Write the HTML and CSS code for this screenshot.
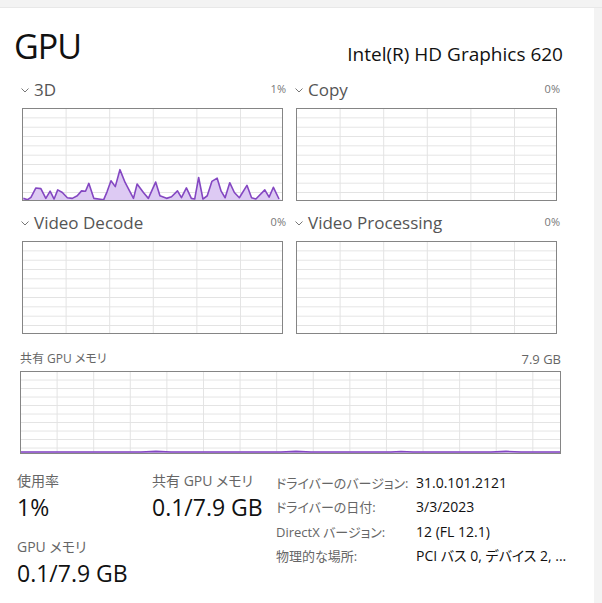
FILE: index.html
```html
<!DOCTYPE html>
<html lang="ja">
<head>
<meta charset="utf-8">
<title>GPU</title>
<link rel="stylesheet" href="styles.css">
</head>
<body>
<div class="topbar"></div>
<div class="main">
  <div class="content">
    <header class="head">
      <h1 class="title">GPU</h1>
      <div class="model">Intel(R) HD Graphics 620</div>
    </header>

    <div class="engines">
      <section class="engine">
        <div class="engine-head">
          <span class="name"><svg class="chev" viewBox="0 0 8 5"><polyline points="0.5,0.5 4,4 7.5,0.5"/></svg>3D</span>
          <span class="pct">1%</span>
        </div>
        <div class="graph">
          <svg class="plot" viewBox="21 24 783 279" preserveAspectRatio="none">
            <path class="area" d="M21,303 L22,298 35,302 45,295 60,266 75,268 90,298 103,276 115,300 126,272 140,280 155,296 170,298 185,290 198,275 210,276 220,252 235,298 265,302 275,278 287,244 300,262 314,210 330,250 355,298 366,254 385,280 400,298 422,248 435,290 455,298 470,293 488,275 500,296 515,266 530,298 540,300 552,234 565,300 578,290 592,246 608,236 620,276 632,296 646,250 660,280 675,296 698,258 712,296 725,300 752,272 765,294 778,264 795,300 804,303 Z"/>
            <polyline class="line" points="22,298 35,302 45,295 60,266 75,268 90,298 103,276 115,300 126,272 140,280 155,296 170,298 185,290 198,275 210,276 220,252 235,298 265,302 275,278 287,244 300,262 314,210 330,250 355,298 366,254 385,280 400,298 422,248 435,290 455,298 470,293 488,275 500,296 515,266 530,298 540,300 552,234 565,300 578,290 592,246 608,236 620,276 632,296 646,250 660,280 675,296 698,258 712,296 725,300 752,272 765,294 778,264 795,300"/>
          </svg>
        </div>
      </section>

      <section class="engine">
        <div class="engine-head">
          <span class="name"><svg class="chev" viewBox="0 0 8 5"><polyline points="0.5,0.5 4,4 7.5,0.5"/></svg>Copy</span>
          <span class="pct">0%</span>
        </div>
        <div class="graph"></div>
      </section>

      <section class="engine">
        <div class="engine-head">
          <span class="name"><svg class="chev" viewBox="0 0 8 5"><polyline points="0.5,0.5 4,4 7.5,0.5"/></svg>Video Decode</span>
          <span class="pct">0%</span>
        </div>
        <div class="graph"></div>
      </section>

      <section class="engine">
        <div class="engine-head">
          <span class="name"><svg class="chev" viewBox="0 0 8 5"><polyline points="0.5,0.5 4,4 7.5,0.5"/></svg>Video Processing</span>
          <span class="pct">0%</span>
        </div>
        <div class="graph"></div>
      </section>
    </div>

    <section class="shared">
      <div class="shared-head">
        <span class="shared-label">共有 GPU メモリ</span>
        <span class="shared-max">7.9 GB</span>
      </div>
      <div class="graph graph-wide">
        <svg class="plot" viewBox="0 0 539 81" preserveAspectRatio="none">
          <path class="area" d="M0,81 L0,79.6 120,79.6 135,79 150,79.6 260,79.6 275,79 290,79.6 370,79.6 380,79.1 392,79.6 470,79.6 485,79 500,79.6 539,79.6 539,81 Z"/>
          <polyline class="line" points="0,80 120,80 135,79.4 150,80 260,80 275,79.4 290,80 370,80 380,79.5 392,80 470,80 485,79.4 500,80 539,80"/>
        </svg>
      </div>
    </section>

    <div class="stats">
      <div class="stat-col stat-col-1">
        <div class="stat-label">使用率</div>
        <div class="stat-value">1%</div>
        <div class="stat-label stat-gap">GPU メモリ</div>
        <div class="stat-value">0.1/7.9 GB</div>
      </div>
      <div class="stat-col stat-col-2">
        <div class="stat-label">共有 GPU メモリ</div>
        <div class="stat-value">0.1/7.9 GB</div>
      </div>
      <dl class="props">
        <dt>ドライバーのバージョン:</dt><dd>31.0.101.2121</dd>
        <dt>ドライバーの日付:</dt><dd>3/3/2023</dd>
        <dt>DirectX バージョン:</dt><dd>12 (FL 12.1)</dd>
        <dt>物理的な場所:</dt><dd>PCI バス 0, デバイス 2, ...</dd>
      </dl>
    </div>
  </div>
  <div class="scrollbar"></div>
</div>
</body>
</html>
```

FILE: styles.css
```css
html, body {
  margin: 0;
  padding: 0;
}

body {
  width: 602px;
  height: 603px;
  overflow: hidden;
  background: #ffffff;
  color: #1a1a1a;
  font-family: "Open Sans", "Noto Sans CJK JP", sans-serif;
  font-feature-settings: "palt";
}

.topbar {
  height: 7px;
  background: #f3f3f3;
  border-bottom: 1px solid #e8e8e8;
}

.main {
  display: flex;
  height: 595px;
}

.content {
  width: 594px;
  padding-left: 14px;
  box-sizing: border-box;
}

.scrollbar {
  width: 8px;
  background: #f3f3f3;
}

/* header */
.head {
  display: flex;
  justify-content: space-between;
  align-items: flex-end;
  padding-top: 18px;
  padding-right: 31px;
}

.title {
  margin: 0;
  font-size: 34px;
  line-height: 40px;
  font-weight: 400;
  letter-spacing: -1px;
  color: #111;
}

.model {
  font-size: 19px;
  line-height: 24px;
  color: #111;
}

/* engine graphs */
.engines {
  display: grid;
  grid-template-columns: 266px 266px;
  column-gap: 8px;
  row-gap: 11px;
  margin-top: 13px;
  margin-left: 6px;
}

.engine-head {
  height: 29px;
  display: flex;
  justify-content: space-between;
  align-items: baseline;
}

.name {
  display: flex;
  align-items: center;
  font-size: 17px;
  line-height: 20px;
  color: #555;
}

.chev {
  width: 8px;
  height: 5px;
  margin: 1px 5px 0 1px;
  fill: none;
  stroke: #777;
  stroke-width: 1;
}

.pct {
  font-size: 11px;
  line-height: 20px;
  color: #777;
}

.graph {
  box-sizing: border-box;
  height: 93px;
  margin: 0 3px 0 2px;
  border: 1px solid #858585;
  background-color: #fff;
  background-image:
    linear-gradient(90deg, transparent calc(100% - 1px), #e3e3e3 calc(100% - 1px)),
    linear-gradient(180deg, transparent calc(100% - 1px), #e3e3e3 calc(100% - 1px));
  background-size: 43.6px 100%, 100% 9.33px;
}

.plot {
  display: block;
  width: 100%;
  height: 100%;
}

.area {
  fill: #ddcaf3;
  stroke: none;
}

.line {
  fill: none;
  stroke: #8447c2;
  stroke-width: 1.6;
  stroke-linejoin: round;
  vector-effect: non-scaling-stroke;
}

/* shared memory */
.shared {
  margin-left: 6px;
}

.shared-head {
  height: 37px;
  box-sizing: border-box;
  width: 541px;
  display: flex;
  justify-content: space-between;
  align-items: flex-end;
  padding-bottom: 4px;
}

.shared-label {
  font-size: 12px;
  line-height: 16px;
  color: #666;
}

.shared-max {
  font-size: 13px;
  line-height: 16px;
  color: #666;
}

.graph-wide {
  width: 541px;
  height: 83px;
  margin: 0;
  background-size: 36.6px 100%, 100% 8.5px;
}

/* stats */
.stats {
  display: flex;
  margin-top: 17px;
  padding-left: 3px;
}

.stat-col-1 {
  width: 135px;
}

.stat-col-2 {
  width: 124px;
}

.stat-label {
  height: 20px;
  overflow: visible;
  font-size: 14px;
  line-height: 20px;
  color: #666;
}

.stat-gap {
  margin-top: 14px;
}

.stat-value {
  height: 32px;
  font-size: 23px;
  line-height: 32px;
  color: #111;
}

.props {
  margin: 0;
  display: grid;
  grid-template-columns: 140px auto;
  grid-auto-rows: 24.3px;
  align-items: center;
}

.props dt {
  height: 20px;
  font-size: 13px;
  line-height: 20px;
  white-space: nowrap;
  color: #666;
}

.props dd {
  height: 20px;
  margin: 0;
  font-size: 14px;
  line-height: 20px;
  white-space: nowrap;
  color: #111;
}
```
